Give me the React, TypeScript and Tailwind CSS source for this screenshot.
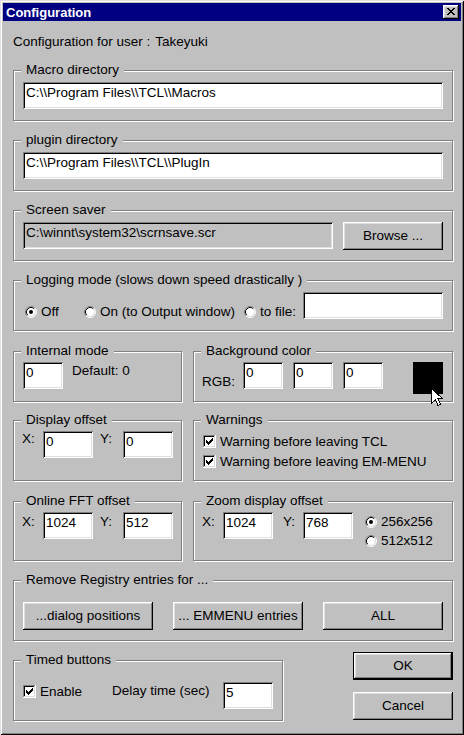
import React from "react";

function Group({
  label,
  className,
  children,
}: {
  label: string;
  className?: string;
  children?: React.ReactNode;
}) {
  return (
    <div
      className={`relative shrink-0 border border-[#808080] shadow-[inset_1px_1px_0_#fff,1px_1px_0_#fff] ${className ?? ""}`}
    >
      <span className="absolute left-[7px] top-[-9px] bg-[#c0c0c0] px-[5px] leading-[15px] whitespace-nowrap">
        {label}
      </span>
      {children}
    </div>
  );
}

function Edit({ value, className, gray }: { value: string; className?: string; gray?: boolean }) {
  return (
    <div
      className={`h-[27px] shrink-0 pl-[3px] pt-[3px] leading-[15px] whitespace-nowrap overflow-hidden shadow-[inset_1px_1px_0_#808080,inset_-1px_-1px_0_#fff,inset_2px_2px_0_#000,inset_-2px_-2px_0_#dfdfdf] ${gray ? "bg-[#c0c0c0]" : "bg-white"} ${className ?? ""}`}
    >
      {value}
    </div>
  );
}

function Btn({ children, className, def }: { children: React.ReactNode; className?: string; def?: boolean }) {
  return (
    <div
      className={`h-[28px] shrink-0 flex items-center justify-center whitespace-nowrap bg-[#c0c0c0] pb-[1px] shadow-[inset_-1px_-1px_0_#000,inset_1px_1px_0_#fff,inset_-2px_-2px_0_#808080,inset_2px_2px_0_#dfdfdf] ${def ? "border border-black" : ""} ${className ?? ""}`}
    >
      {children}
    </div>
  );
}

function Radio({ checked }: { checked?: boolean }) {
  return (
    <svg width="12" height="12" viewBox="0 0 12 12" className="shrink-0">
      <circle cx="6" cy="6" r="5" fill="#fff" />
      <path d="M2.11 9.89A5.5 5.5 0 0 1 9.89 2.11" fill="none" stroke="#808080" />
      <path d="M9.89 2.11A5.5 5.5 0 0 1 2.11 9.89" fill="none" stroke="#fff" />
      <path d="M2.82 9.18A4.5 4.5 0 0 1 9.18 2.82" fill="none" stroke="#000" />
      <path d="M9.18 2.82A4.5 4.5 0 0 1 2.82 9.18" fill="none" stroke="#dfdfdf" />
      {checked && <circle cx="6" cy="6" r="2" fill="#000" />}
    </svg>
  );
}

function Check({ checked }: { checked?: boolean }) {
  return (
    <svg width="13" height="13" viewBox="0 0 13 13" shapeRendering="crispEdges" className="shrink-0">
      <rect x="0" y="0" width="13" height="13" fill="#fff" />
      <rect x="0" y="0" width="12" height="1" fill="#808080" />
      <rect x="0" y="0" width="1" height="12" fill="#808080" />
      <rect x="1" y="1" width="10" height="1" fill="#000" />
      <rect x="1" y="1" width="1" height="10" fill="#000" />
      <rect x="1" y="11" width="11" height="1" fill="#dfdfdf" />
      <rect x="11" y="1" width="1" height="11" fill="#dfdfdf" />
      {checked && (
        <g fill="#000">
          <rect x="9" y="3" width="1" height="1" />
          <rect x="8" y="4" width="2" height="1" />
          <rect x="3" y="5" width="1" height="1" />
          <rect x="7" y="5" width="3" height="1" />
          <rect x="3" y="6" width="2" height="1" />
          <rect x="6" y="6" width="3" height="1" />
          <rect x="3" y="7" width="5" height="1" />
          <rect x="4" y="8" width="3" height="1" />
          <rect x="5" y="9" width="1" height="1" />
        </g>
      )}
    </svg>
  );
}

function CloseBtn() {
  return (
    <div className="w-[16px] h-[14px] bg-[#c0c0c0] pl-[4px] pt-[3px] shadow-[inset_-1px_-1px_0_#000,inset_1px_1px_0_#fff,inset_-2px_-2px_0_#808080,inset_2px_2px_0_#dfdfdf]">
      <svg width="8" height="7" viewBox="0 0 8 7" shapeRendering="crispEdges" className="block">
        <g fill="#000">
          <rect x="0" y="0" width="2" height="1" />
          <rect x="6" y="0" width="2" height="1" />
          <rect x="1" y="1" width="2" height="1" />
          <rect x="5" y="1" width="2" height="1" />
          <rect x="2" y="2" width="4" height="1" />
          <rect x="3" y="3" width="2" height="1" />
          <rect x="2" y="4" width="4" height="1" />
          <rect x="1" y="5" width="2" height="1" />
          <rect x="5" y="5" width="2" height="1" />
          <rect x="0" y="6" width="2" height="1" />
          <rect x="6" y="6" width="2" height="1" />
        </g>
      </svg>
    </div>
  );
}

function RadioItem({ label, checked, className }: { label: string; checked?: boolean; className?: string }) {
  return (
    <div className={`h-[15px] flex items-center gap-[4px] whitespace-nowrap shrink-0 ${className ?? ""}`}>
      <Radio checked={checked} />
      <span>{label}</span>
    </div>
  );
}

function CheckItem({ label, checked, className }: { label: string; checked?: boolean; className?: string }) {
  return (
    <div className={`h-[15px] flex items-center gap-[4px] whitespace-nowrap shrink-0 ${className ?? ""}`}>
      <Check checked={checked} />
      <span>{label}</span>
    </div>
  );
}

export default function App() {
  return (
    <div className="relative w-[464px] h-[735px] overflow-hidden bg-[#c0c0c0] p-[3px] text-[13.5px] leading-[15px] text-black font-['Liberation_Sans',Arial,sans-serif] shadow-[inset_1px_1px_0_#dfdfdf,inset_-1px_-1px_0_#000,inset_2px_2px_0_#fff,inset_-2px_-2px_0_#808080]">
      <div className="h-[18px] bg-[#000080] flex items-center justify-between pl-[3px] pr-[2px]">
        <span className="text-white font-bold text-[13px] leading-[15px]">Configuration</span>
        <CloseBtn />
      </div>

      <div className="pl-[10px] flex flex-col items-start">
        <div className="mt-[13px] flex whitespace-nowrap">
          <span>Configuration for user :</span>
          <span className="ml-[5px]">Takeyuki</span>
        </div>

        <Group label="Macro directory" className="mt-[21px] w-[440px] h-[51px] pt-[11px] pl-[9px]">
          <Edit value={"C:\\\\Program Files\\\\TCL\\\\Macros"} className="w-[420px]" />
        </Group>

        <Group label="plugin directory" className="mt-[19px] w-[440px] h-[51px] pt-[11px] pl-[9px]">
          <Edit value={"C:\\\\Program Files\\\\TCL\\\\PlugIn"} className="w-[420px]" />
        </Group>

        <Group label="Screen saver" className="mt-[19px] w-[440px] h-[51px] pt-[11px] pl-[9px] flex items-start gap-[10px]">
          <Edit value={"C:\\winnt\\system32\\scrnsave.scr"} className="w-[310px]" gray />
          <Btn className="w-[100px]">Browse ...</Btn>
        </Group>

        <Group
          label="Logging mode (slows down speed drastically )"
          className="mt-[19px] w-[440px] h-[51px] pt-[11px] pl-[11px] flex items-start"
        >
          <RadioItem label="Off" checked className="w-[59px] mt-[12px]" />
          <RadioItem label="On (to Output window)" className="w-[160px] mt-[12px]" />
          <RadioItem label="to file:" className="w-[59px] mt-[12px]" />
          <Edit value="" className="w-[140px]" />
        </Group>

        <div className="mt-[20px] flex items-start">
          <Group label="Internal mode" className="w-[169px] h-[51px] pt-[10px] pl-[9px] flex items-start">
            <Edit value="0" className="w-[40px]" />
            <span className="ml-[9px] mt-[1px] whitespace-nowrap">Default: 0</span>
          </Group>
          <Group label="Background color" className="ml-[11px] w-[260px] h-[51px] pt-[10px] pl-[8px] flex items-start">
            <span className="w-[41px] mt-[12px] shrink-0">RGB:</span>
            <Edit value="0" className="w-[40px]" />
            <Edit value="0" className="w-[40px] ml-[10px]" />
            <Edit value="0" className="w-[40px] ml-[10px]" />
            <div className="ml-[30px] w-[30px] h-[32px] bg-black shrink-0" />
          </Group>
        </div>

        <div className="mt-[18px] flex items-start">
          <Group label="Display offset" className="w-[169px] h-[61px] pt-[10px] pl-[8px] flex items-start">
            <span className="w-[21px] shrink-0">X:</span>
            <Edit value="0" className="w-[50px]" />
            <span className="ml-[7px] w-[23px] shrink-0">Y:</span>
            <Edit value="0" className="w-[50px]" />
          </Group>
          <Group label="Warnings" className="ml-[11px] w-[260px] h-[61px] pt-[13px] pl-[9px] flex flex-col gap-[5px]">
            <CheckItem label="Warning before leaving TCL" checked />
            <CheckItem label="Warning before leaving EM-MENU" checked />
          </Group>
        </div>

        <div className="mt-[20px] flex items-start">
          <Group label="Online FFT offset" className="w-[169px] h-[60px] pt-[10px] pl-[8px] flex items-start">
            <span className="w-[21px] mt-[2px] shrink-0">X:</span>
            <Edit value="1024" className="w-[50px]" />
            <span className="ml-[7px] mt-[2px] w-[23px] shrink-0">Y:</span>
            <Edit value="512" className="w-[50px]" />
          </Group>
          <Group label="Zoom display offset" className="ml-[11px] w-[260px] h-[60px] pt-[10px] pl-[8px] flex items-start">
            <span className="w-[21px] mt-[2px] shrink-0">X:</span>
            <Edit value="1024" className="w-[50px]" />
            <span className="ml-[10px] mt-[2px] w-[20px] shrink-0">Y:</span>
            <Edit value="768" className="w-[50px]" />
            <div className="ml-[12px] mt-[2px] flex flex-col gap-[4px]">
              <RadioItem label="256x256" checked />
              <RadioItem label="512x512" />
            </div>
          </Group>
        </div>

        <Group
          label="Remove Registry entries for ..."
          className="mt-[19px] w-[440px] h-[61px] pt-[21px] pl-[9px] flex items-start gap-[20px]"
        >
          <Btn className="w-[130px]">...dialog positions</Btn>
          <Btn className="w-[130px]">... EMMENU entries</Btn>
          <Btn className="w-[120px]">ALL</Btn>
        </Group>

        <div className="mt-[11px] flex items-start">
          <Group label="Timed buttons" className="mt-[8px] w-[270px] h-[61px] pt-[21px] pl-[9px] flex items-start">
            <CheckItem label="Enable" checked className="w-[89px] mt-[2px]" />
            <span className="w-[111px] mt-[1px] shrink-0 whitespace-nowrap">Delay time (sec)</span>
            <Edit value="5" className="w-[50px]" />
          </Group>
          <div className="ml-[70px] flex flex-col">
            <Btn def className="w-[100px]">OK</Btn>
            <Btn className="w-[100px] mt-[12px]">Cancel</Btn>
          </div>
        </div>
      </div>

      <svg
        width="14"
        height="20"
        viewBox="0 0 14 20"
        className="absolute left-[431px] top-[388px] pointer-events-none"
        shapeRendering="crispEdges"
      >
        <path
          d="M0.5 0.5 L0.5 15.5 L4.5 11.5 L7 17.5 L9.5 16.5 L7 10.5 L11.5 10.5 Z"
          fill="#fff"
          stroke="#000"
          strokeWidth="1"
          strokeLinejoin="miter"
        />
      </svg>
    </div>
  );
}
